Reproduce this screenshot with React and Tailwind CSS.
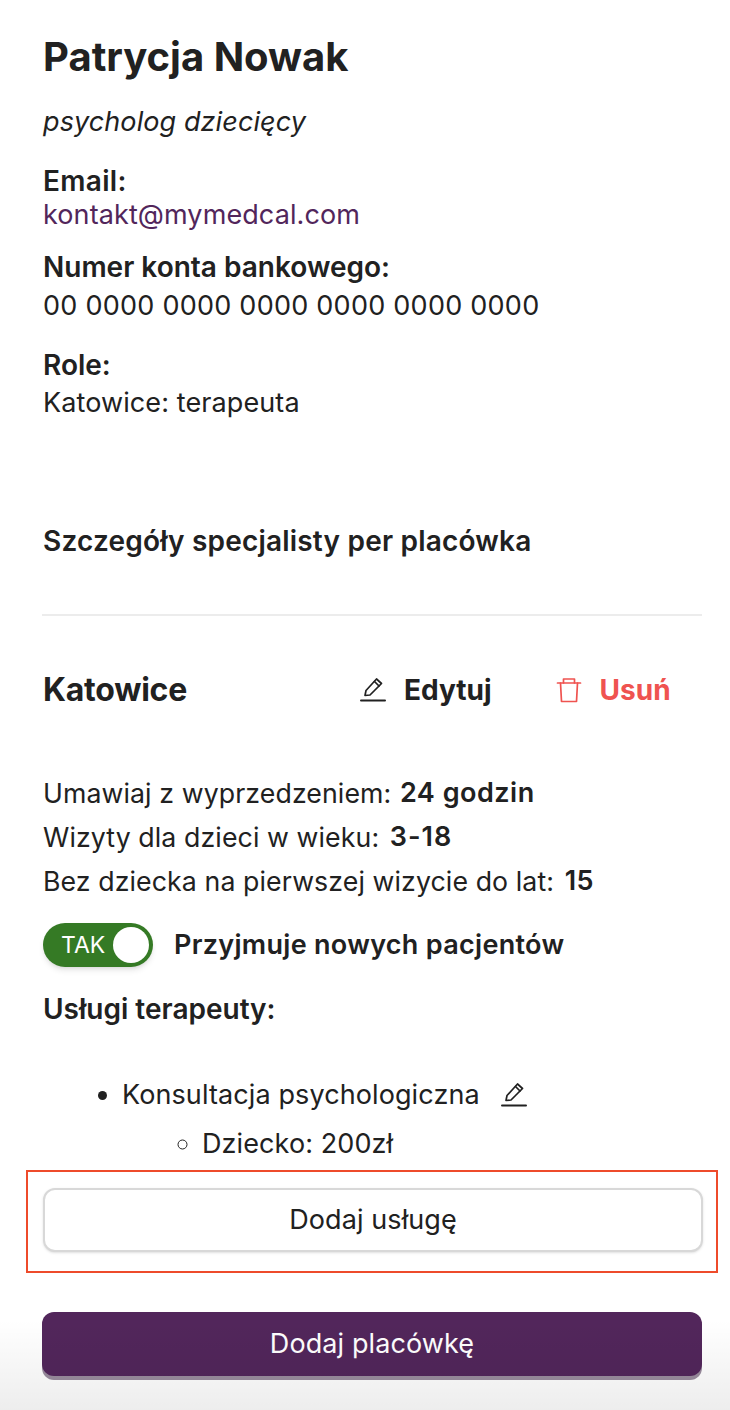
const Pen = ({ className }) => (
  <svg viewBox="0 0 26 26" fill="none" stroke="currentColor" strokeWidth="1.7" strokeLinejoin="round" strokeLinecap="round" className={className}>
    <path d="M5 18.5 L6 13.5 L16.5 2 L21.5 6.5 L10 18 Z" />
    <path d="M14.5 4.5 L19 9" />
    <path d="M1 23.5 H25" strokeWidth="2" />
  </svg>
);

const Trash = ({ className }) => (
  <svg viewBox="0 0 26 26" fill="none" stroke="currentColor" strokeWidth="1.7" strokeLinejoin="round" strokeLinecap="round" className={className}>
    <path d="M1.5 6 H24.5" />
    <path d="M7.5 6 V2 H18.5 V6" />
    <path d="M4.5 6 L5.5 24.5 H20.5 L21.5 6" />
  </svg>
);

export default function App() {
  return (
    <div className="relative h-[1410px] w-[730px] overflow-hidden bg-white font-['Inter',sans-serif] text-[27px] tracking-[0.1px] text-[#212121]">
      <div className="pl-[43px] pt-[33px]">
        <h1 className="text-[40px] font-bold leading-[48px] tracking-normal">Patrycja Nowak</h1>
        <p className="mt-[25px] h-[32px] italic leading-[32px]">psycholog dziecięcy</p>
        <p className="mt-[26px] text-[28px] font-semibold leading-[34px] tracking-[0.3px]">Email:</p>
        <p className="leading-[34px] text-[#52265b]">kontakt@mymedcal.com</p>
        <p className="mt-[16px] text-[28px] font-semibold leading-[38px] tracking-normal">Numer konta bankowego:</p>
        <p className="mt-[1px] leading-[38px] tracking-[0.25px]">00 0000 0000 0000 0000 0000 0000</p>
        <p className="mt-[21px] text-[28px] font-semibold leading-[38px] tracking-normal">Role:</p>
        <p className="leading-[38px]">Katowice: terapeuta</p>
        <p className="mt-[100px] text-[28px] font-semibold leading-[38px] tracking-[0.2px]">Szczegóły specjalisty per placówka</p>
      </div>
      <div className="ml-[42px] mr-[28px] mt-[54px] border-t-2 border-[#ececec]" />
      <div className="ml-[43px] mr-[28px]">
        <div className="mt-[52px] flex h-[44px] items-center">
          <h2 className="w-[317px] text-[32px] font-bold tracking-[-0.25px]">Katowice</h2>
          <Pen className="size-[26px] text-[#212121]" />
          <span className="ml-[18px] text-[28px] font-bold tracking-normal">Edytuj</span>
          <Trash className="ml-[64px] size-[26px] text-[#ef5350]" />
          <span className="ml-[18px] text-[28px] font-bold tracking-normal text-[#ef5350]">Usuń</span>
        </div>
        <p className="mt-[59px] flex h-[44px] items-center whitespace-pre text-[26.7px]">Umawiaj z wyprzedzeniem: <b className="ml-[1px] text-[27px] font-semibold tracking-[0.5px]">24 godzin</b></p>
        <p className="flex h-[44px] items-center whitespace-pre text-[26.7px]">Wizyty dla dzieci w wieku: <b className="ml-[3px] text-[27px] font-semibold tracking-[1px]">3-18</b></p>
        <p className="flex h-[44px] items-center whitespace-pre text-[26.7px]">Bez dziecka na pierwszej wizycie do lat: <b className="ml-[3px] text-[27px] font-semibold tracking-[0.5px]">15</b></p>
        <div className="mt-[20px] flex items-center">
          <div className="flex h-[44px] w-[110px] items-center justify-between rounded-full bg-[#357a25] pl-[18px] pr-[4px] shadow-md">
            <span className="text-[23px] tracking-normal text-white">TAK</span>
            <span className="size-[36px] rounded-full bg-white" />
          </div>
          <span className="ml-[21px] font-semibold tracking-[0.3px]">Przyjmuje nowych pacjentów</span>
        </div>
        <p className="mt-[23px] text-[28px] font-semibold leading-[38px] tracking-normal">Usługi terapeuty:</p>
        <ul className="mt-[41px] list-disc pl-[79px]">
          <li className="leading-[52px]">
            <span className="flex h-[52px] items-center">
              Konsultacja psychologiczna
              <Pen className="ml-[21px] size-[26px]" />
            </span>
            <ul className="list-[circle] pl-[80px]">
              <li className="leading-[46px]">Dziecko: 200zł</li>
            </ul>
          </li>
        </ul>
      </div>
      <div className="ml-[26px] mt-[3px] h-[103px] w-[692px] border-2 border-[#ee4b2b] pl-[15px] pr-[13px] pt-[16px]">
        <button className="h-[64px] w-[660px] rounded-[12px] border-2 border-[#d8d8d8] bg-white shadow-sm">Dodaj usługę</button>
      </div>
      <div className="ml-[42px] mt-[39px]">
        <button className="h-[64px] w-[660px] rounded-[12px] bg-[#52265b] text-white shadow-[0_4px_0_#9a8c9e]">Dodaj placówkę</button>
      </div>
      <div className="absolute inset-x-0 bottom-0 h-[90px] bg-gradient-to-b from-transparent to-[#00000012]" />
    </div>
  );
}
